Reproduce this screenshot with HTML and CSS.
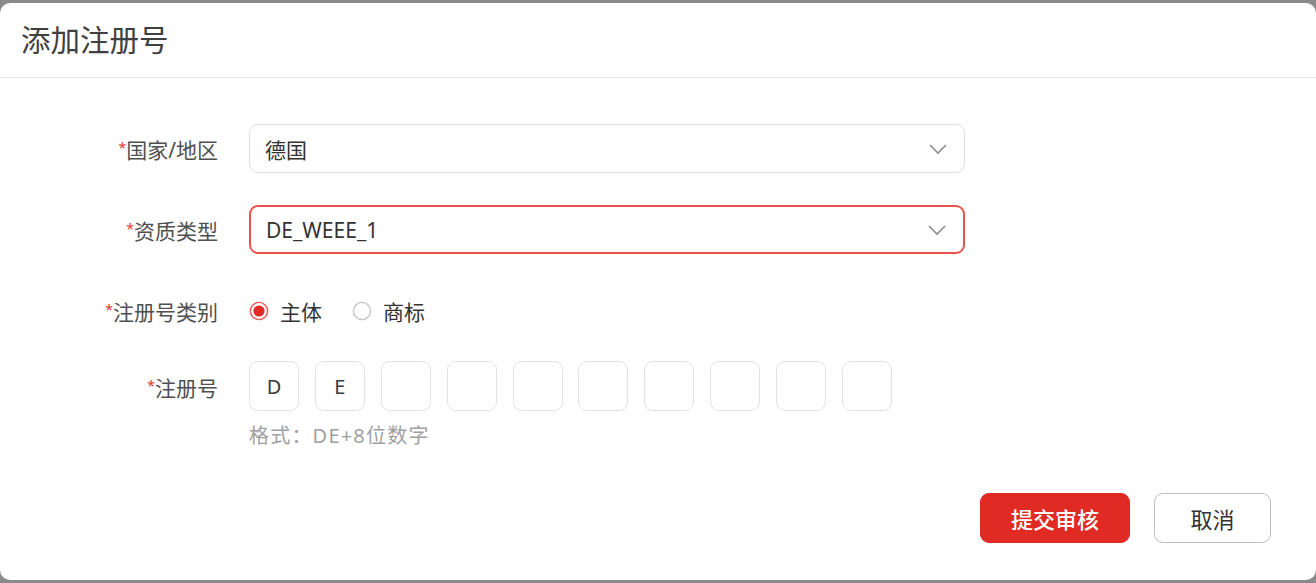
FILE: index.html
```html
<!DOCTYPE html>
<html lang="zh-CN">
<head>
<meta charset="utf-8">
<title>添加注册号</title>
<link rel="stylesheet" href="styles.css">
</head>
<body>
<div class="dialog">
  <div class="header"><span class="title">添加注册号</span></div>
  <div class="form">
    <div class="row">
      <div class="label"><span class="req">*</span>国家/地区</div>
      <div class="select">
        <span class="value">德国</span>
        <svg class="chev" width="20" height="12" viewBox="0 0 20 12"><path d="M2 2 L10 10 L18 2" fill="none" stroke="#8c8c8c" stroke-width="1.6"/></svg>
      </div>
    </div>
    <div class="row row2">
      <div class="label"><span class="req">*</span>资质类型</div>
      <div class="select active">
        <span class="value">DE_WEEE_1</span>
        <svg class="chev" width="20" height="12" viewBox="0 0 20 12"><path d="M2 2 L10 10 L18 2" fill="none" stroke="#8c8c8c" stroke-width="1.6"/></svg>
      </div>
    </div>
    <div class="row row3">
      <div class="label"><span class="req">*</span>注册号类别</div>
      <div class="radios">
        <label class="radio">
          <svg width="20" height="20" viewBox="0 0 20 20"><circle cx="10" cy="10" r="8.6" fill="#fff" stroke="#ea5a54" stroke-width="1.4"/><circle cx="10" cy="10" r="5.6" fill="#e02a24"/></svg>
          <span>主体</span>
        </label>
        <label class="radio">
          <svg width="20" height="20" viewBox="0 0 20 20"><circle cx="10" cy="10" r="8.6" fill="#fff" stroke="#c4c4c4" stroke-width="1.3"/></svg>
          <span>商标</span>
        </label>
      </div>
    </div>
    <div class="row row4">
      <div class="label"><span class="req">*</span>注册号</div>
      <div class="control">
        <div class="boxes">
          <div class="box">D</div>
          <div class="box">E</div>
          <div class="box"></div>
          <div class="box"></div>
          <div class="box"></div>
          <div class="box"></div>
          <div class="box"></div>
          <div class="box"></div>
          <div class="box"></div>
          <div class="box"></div>
        </div>
        <div class="hint"><span class="cjk">格式：</span>DE+8位数字</div>
      </div>
    </div>
  </div>
  <div class="footer">
    <button class="btn primary">提交审核</button>
    <button class="btn">取消</button>
  </div>
</div>
</body>
</html>
```

FILE: styles.css
```css
html, body {
  margin: 0;
  padding: 0;
  background: #8a8a8a;
  height: 583px;
  overflow: hidden;
}
body {
  font-family: "Noto Sans", "Noto Sans CJK SC", sans-serif;
  color: #333;
}
.dialog {
  margin-top: 3px;
  height: 577px;
  background: #fff;
  border-radius: 10px;
  box-sizing: border-box;
}
.header {
  height: 75px;
  border-bottom: 1px solid #e6e6e6;
  box-sizing: border-box;
  display: flex;
  align-items: center;
  padding-left: 21px;
}
.title {
  font-size: 29.5px;
  color: #404040;
  line-height: 1;
}
.form {
  padding-top: 46px;
}
.row {
  display: flex;
  align-items: center;
}
.label {
  width: 218px;
  text-align: right;
  font-size: 21px;
  color: #505050;
  flex-shrink: 0;
  margin-right: 31px;
  line-height: 30px;
}
.req {
  color: #e53935;
  font-size: 14px;
  vertical-align: 5px;
}
.select {
  width: 716px;
  height: 49px;
  box-sizing: border-box;
  border: 1.5px solid #dedede;
  border-radius: 9px;
  display: flex;
  align-items: center;
  justify-content: space-between;
  padding: 0 16px 0 15px;
}
.select.active {
  border: 2px solid #e8534d;
}
.value {
  font-size: 21px;
  color: #333;
}
.row2 {
  margin-top: 32px;
}
.row3 {
  margin-top: 37px;
  height: 40px;
}
.radios {
  display: flex;
  align-items: center;
}
.radio {
  display: flex;
  align-items: center;
  gap: 11px;
  font-size: 21px;
  color: #333;
  margin-right: 30px;
}
.row4 {
  margin-top: 30px;
  align-items: flex-start;
}
.row4 .label {
  line-height: 50px;
}
.boxes {
  display: flex;
  gap: 15.9px;
}
.box {
  width: 50px;
  height: 50px;
  box-sizing: border-box;
  border: 1.5px solid #e2e2e2;
  border-radius: 9px;
  display: flex;
  align-items: center;
  justify-content: center;
  font-size: 20px;
  color: #3a3a3a;
}
.hint {
  margin-top: 13px;
  font-size: 20px;
  color: #a0a0a0;
  line-height: 22px;
  letter-spacing: 1.2px;
}
.cjk {
  font-family: "Noto Sans CJK SC", sans-serif;
}
.footer {
  display: flex;
  justify-content: flex-end;
  gap: 24px;
  padding-right: 45px;
  margin-top: 46px;
}
.btn {
  height: 50px;
  width: 117px;
  box-sizing: border-box;
  border: 1.5px solid #bdbdbd;
  border-radius: 9px;
  background: #fff;
  font-family: "Noto Sans CJK SC", sans-serif;
  font-size: 22px;
  color: #333;
  padding: 0;
}
.btn.primary {
  width: 150px;
  background: #e02a24;
  border-color: #e02a24;
  color: #fff;
  font-weight: 500;
}
```
